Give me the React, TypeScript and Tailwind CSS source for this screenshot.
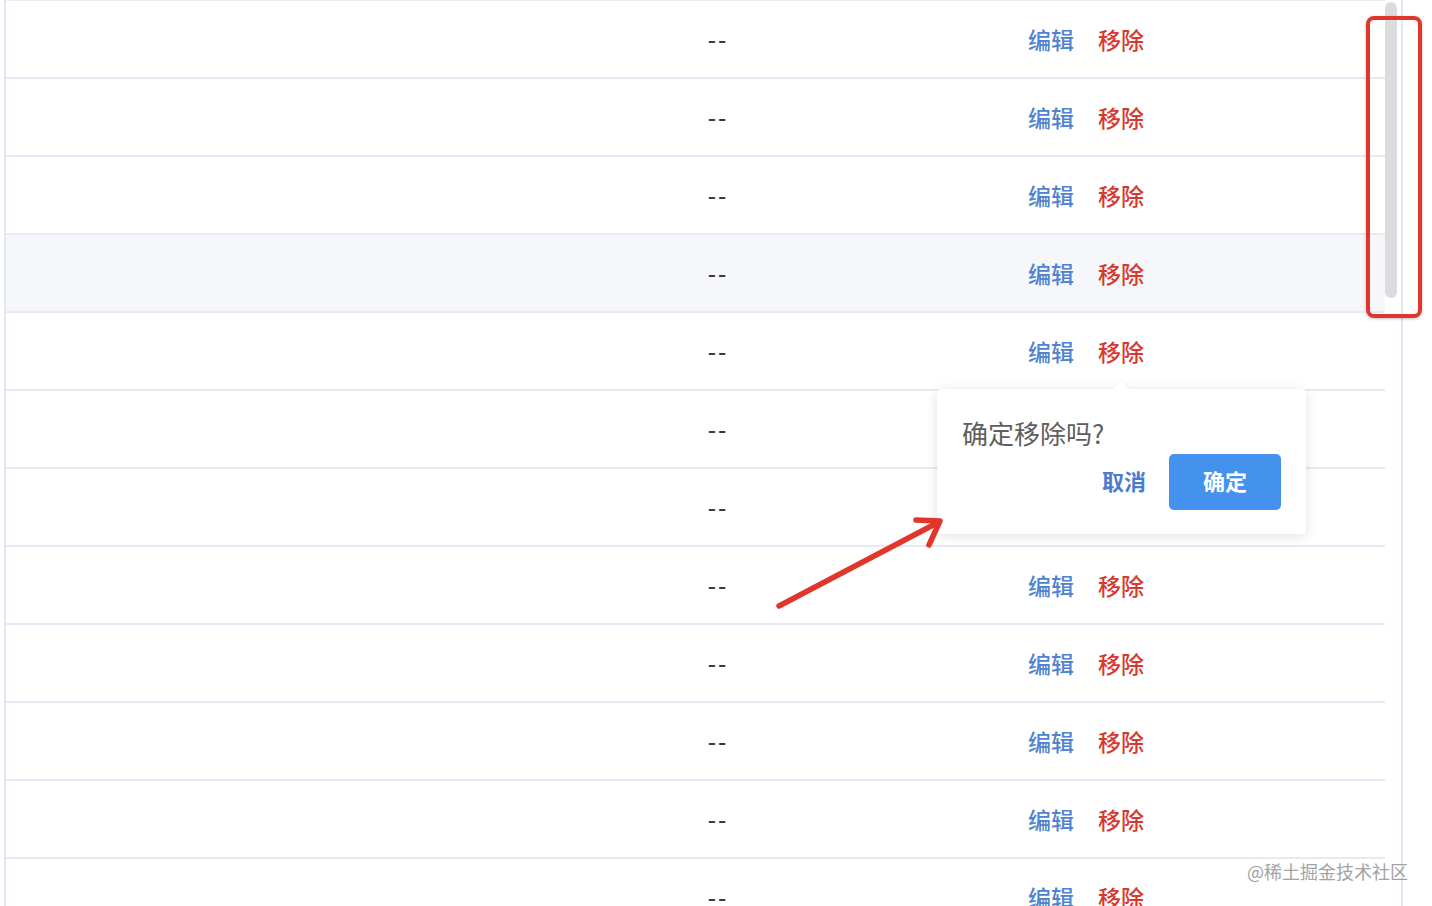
import React from 'react';

const rows = Array.from({ length: 12 }, (_, i) => i);

const Row = ({ hover }: { hover?: boolean }) => (
  <div
    className={`flex h-[78px] shrink-0 items-center border-b-2 border-[#e6e9f6] ${
      hover ? 'bg-[#f5f7fb]' : 'bg-white'
    }`}
  >
    <div className="w-[612px]" />
    <div
      className="w-[200px] pt-[4px] text-center text-[25px] tracking-[2px] text-[#3a3a3a]"
      style={{ fontFamily: '"Liberation Sans", sans-serif' }}
    >
      --
    </div>
    <div className="w-[210px]" />
    <div className="flex items-center gap-[24px] text-[23px] font-medium">
      <span className="text-[#4f83d1]">编辑</span>
      <span className="text-[#d8392b]">移除</span>
    </div>
  </div>
);

const App = () => {
  return (
    <div
      className="relative h-[906px] w-[1432px] overflow-hidden bg-white"
      style={{ fontFamily: '"Noto Sans CJK SC", "Noto Sans", sans-serif' }}
    >
      <div className="ml-[4px] flex h-full w-[1399px] border-r-2 border-l-2 border-[#e2e5f3]">
        {/* table body */}
        <div className="flex w-[1381px] flex-col border-t border-[#ececec]">
          {rows.map(i => (
            <Row key={i} hover={i === 3} />
          ))}
        </div>
        {/* scrollbar */}
        <div className="w-[16px] pt-[2px]">
          <div className="h-[296px] w-[12px] rounded-full bg-[#dcdcdc]" />
        </div>
      </div>

      {/* popconfirm */}
      <div className="absolute left-[937px] top-[389px] h-[145px] w-[369px] rounded-[4px] bg-white px-[25px] pt-[26px] shadow-[0_2px_12px_rgba(0,0,0,0.12)]">
        <div className="absolute -top-[6px] left-[178px] h-[12px] w-[12px] rotate-45 bg-white shadow-[-1px_-1px_2px_rgba(0,0,0,0.04)]" />
        <div className="text-[26px] leading-[36px] text-[#5e5e5e]">确定移除吗?</div>
        <div className="mt-[3px] flex items-center justify-end gap-[23px]">
          <span className="-mt-[4px] text-[22px] font-bold text-[#4a7bd3]">取消</span>
          <div className="flex h-[56px] w-[112px] items-center justify-center rounded-[5px] bg-[#4591ee] pb-[3px] text-[22px] font-bold text-white">
            确定
          </div>
        </div>
      </div>

      {/* annotation: red box */}
      <div className="absolute left-[1366px] top-[16px] h-[302px] w-[56px] rounded-[8px] border-4 border-[#e0362c] shadow-[0_1px_3px_rgba(0,0,0,0.25)]" />

      {/* annotation: arrow */}
      <svg className="absolute left-0 top-0" width="1432" height="906" style={{ pointerEvents: 'none' }}>
        <g stroke="#e0362c" strokeWidth="5.5" strokeLinecap="round" strokeLinejoin="round" fill="none">
          <line x1="779" y1="606" x2="937" y2="523" />
          <polyline points="916,520 940,521 929,545" />
        </g>
      </svg>

      {/* watermark */}
      <div className="absolute left-[1247px] top-[858px] text-[18px] text-[#a3a3a3]">@稀土掘金技术社区</div>
    </div>
  );
};

export default App;
